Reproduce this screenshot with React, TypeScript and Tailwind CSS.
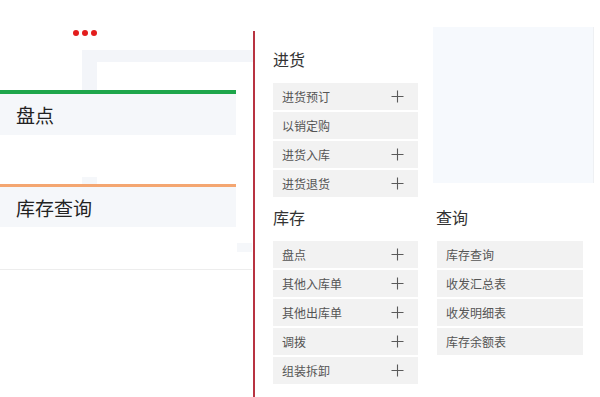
import React from "react";

const font = { fontFamily: '"Noto Sans CJK SC", "Noto Sans", sans-serif' };

function Plus() {
  return (
    <svg width="13" height="13" viewBox="0 0 13 13" className="shrink-0">
      <path d="M6.5 0.5V12.5M0.5 6.5H12.5" stroke="#5a5a5a" strokeWidth="1.1" fill="none" />
    </svg>
  );
}

function Item({ label, plus }: { label: string; plus?: boolean }) {
  return (
    <div className="h-[27px] bg-[#f2f2f2] flex items-center justify-between pl-[9px] pr-[14px]">
      <span className="text-[12px] leading-none text-[#555]">{label}</span>
      {plus && <Plus />}
    </div>
  );
}

function Header({ children }: { children: React.ReactNode }) {
  return <div className="h-[22px] text-[16px] leading-[22px] text-[#333]">{children}</div>;
}

export default function App() {
  return (
    <div className="w-[600px] h-[397px] bg-white overflow-hidden flex" style={font}>
      {/* left canvas */}
      <div className="w-[253px] shrink-0 flex flex-col">
        <div className="pt-[30px] pl-[73px] flex gap-[3px] h-[36px]">
          <span className="w-[6px] h-[6px] rounded-full bg-[#e31d1d]" />
          <span className="w-[6px] h-[6px] rounded-full bg-[#e31d1d]" />
          <span className="w-[6px] h-[6px] rounded-full bg-[#e31d1d]" />
        </div>
        <div className="mt-[14px] ml-[82px] h-[40px] border-t-[12px] border-l-[15px] border-[#f3f5f9]" />
        <div className="w-[236px] h-[4px] bg-[#1ea64b]" />
        <div className="w-[236px] h-[41px] bg-[#f5f7fa] flex items-center pl-[16px]">
          <span className="text-[19px] leading-none text-[#222]">盘点</span>
        </div>
        <div className="h-[42px]" />
        <div className="ml-[82px] w-[15px] h-[7px] bg-[#f5f7fa]" />
        <div className="w-[236px] h-[3px] bg-[#f4a671]" />
        <div className="w-[236px] h-[40px] bg-[#f5f7fa] flex items-center pl-[16px]">
          <span className="text-[19px] leading-none text-[#222]">库存查询</span>
        </div>
        <div className="ml-[237px] mt-[16px] w-[15px] h-[9px] bg-[#f5f7fa]" />
        <div className="mt-[17px] w-[252px] h-px bg-[#ededed]" />
      </div>

      {/* red divider */}
      <div className="w-[2px] shrink-0 mt-[31px] bg-[#b83341]" />

      {/* right menu */}
      <div className="flex pl-[18px] pt-[27px]">
        <div className="w-[145px] flex flex-col pt-[21px]">
          <Header>进货</Header>
          <div className="mt-[13px] flex flex-col gap-[2px]">
            <Item label="进货预订" plus />
            <Item label="以销定购" />
            <Item label="进货入库" plus />
            <Item label="进货退货" plus />
          </div>
          <div className="mt-[9px]">
            <Header>库存</Header>
          </div>
          <div className="mt-[13px] flex flex-col gap-[2px]">
            <Item label="盘点" plus />
            <Item label="其他入库单" plus />
            <Item label="其他出库单" plus />
            <Item label="调拨" plus />
            <Item label="组装拆卸" plus />
          </div>
        </div>
        <div className="ml-[15px] w-[161px] flex flex-col">
          <div className="h-[156px] bg-[#f6f9fd] border-r border-[#eef0f3]" />
          <div className="mt-[23px] pl-[3px]">
            <Header>查询</Header>
          </div>
          <div className="mt-[13px] ml-[4px] w-[146px] flex flex-col gap-[2px]">
            <Item label="库存查询" />
            <Item label="收发汇总表" />
            <Item label="收发明细表" />
            <Item label="库存余额表" />
          </div>
        </div>
      </div>
    </div>
  );
}
